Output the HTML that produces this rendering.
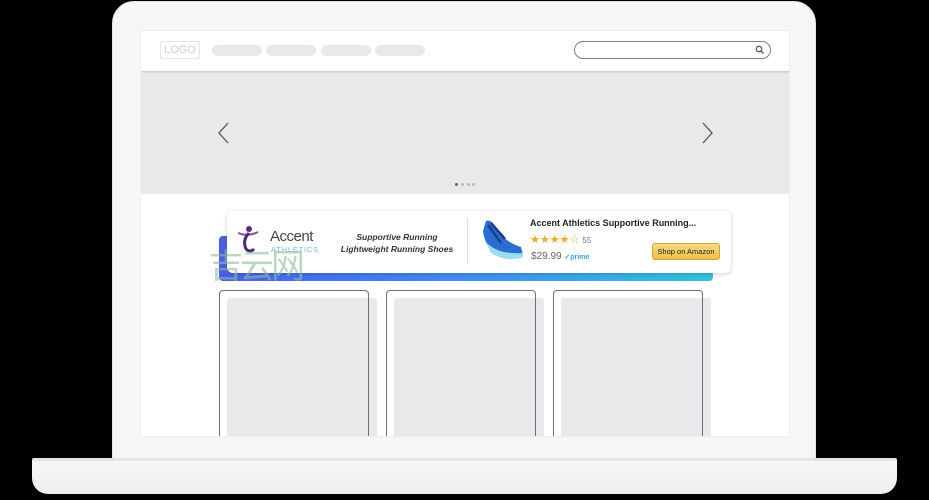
<!DOCTYPE html>
<html><head><style>
*{margin:0;padding:0;box-sizing:border-box}
body{width:929px;height:500px;background:#000;position:relative;overflow:hidden;font-family:"Liberation Sans",sans-serif}
.a{position:absolute}
</style></head><body>
<div class="a" style="left:112px;top:1px;width:704px;height:465px;background:#f5f6f7;border-radius:22px 22px 0 0;border:1px solid #e2e3e5"></div>
<div class="a" style="left:32px;top:458px;width:865px;height:36px;background:linear-gradient(#f6f7f8,#eceef0);border-radius:2px 2px 16px 16px;border-top:3px solid #e4e5e7"></div>
<div class="a" style="left:140px;top:30px;width:650px;height:407px;background:#fff;border:1px solid #eee;overflow:hidden">
 <div class="a" style="left:0;top:0;width:650px;height:40px;background:#fff;box-shadow:0 2px 2px #c9cacc"></div>
 <div class="a" style="left:19px;top:10px;width:40px;height:18px;border:1px solid #e4e5e7;border-radius:2px;color:#d0d1d3;font-size:11px;line-height:16px;text-align:center;letter-spacing:0">LOGO</div>
 <div class="a" style="left:71px;top:14px;width:50px;height:11px;background:#e8e9ea;border-radius:6px"></div>
 <div class="a" style="left:125px;top:14px;width:50px;height:11px;background:#e8e9ea;border-radius:6px"></div>
 <div class="a" style="left:180px;top:14px;width:50px;height:11px;background:#e8e9ea;border-radius:6px"></div>
 <div class="a" style="left:234px;top:14px;width:50px;height:11px;background:#e8e9ea;border-radius:6px"></div>
 <div class="a" style="left:433px;top:10px;width:197px;height:18px;border:1.5px solid #7a828c;border-radius:9px"></div>
 <svg class="a" style="left:614px;top:14px" width="10" height="10"><circle cx="4" cy="4" r="2.7" fill="none" stroke="#555" stroke-width="1.3"/><path d="M6 6L8.5 8.5" stroke="#555" stroke-width="1.4"/></svg>
 <div class="a" style="left:0;top:42px;width:650px;height:121px;background:#e8e9ea"></div>
 <svg class="a" style="left:76px;top:90px" width="14" height="24"><path d="M11 2L2 12L11 22" fill="none" stroke="#555" stroke-width="1.3"/></svg>
 <svg class="a" style="left:559px;top:90px" width="14" height="24"><path d="M3 2L12 12L3 22" fill="none" stroke="#555" stroke-width="1.3"/></svg>
 <div class="a" style="left:314px;top:152px;width:3px;height:3px;background:#666;border-radius:50%"></div>
 <div class="a" style="left:320px;top:152px;width:3px;height:3px;background:#bbb;border-radius:50%"></div>
 <div class="a" style="left:326px;top:152px;width:3px;height:3px;background:#bbb;border-radius:50%"></div>
 <div class="a" style="left:331px;top:152px;width:3px;height:3px;background:#bbb;border-radius:50%"></div>
 <div class="a" style="left:78px;top:205px;width:494px;height:45px;background:linear-gradient(90deg,#4a5ee8,#3f8ef0 50%,#2fc3dc);border-radius:4px"></div>
 <div class="a" style="left:86px;top:180px;width:504px;height:62px;background:#fff;border-radius:6px;box-shadow:0 1px 4px rgba(0,0,0,.2)"></div>
 <svg class="a" style="left:95px;top:194px" width="24" height="30"><circle cx="13" cy="4" r="3" fill="#5a2d82"/><path d="M2 8Q12 12 22 7" stroke="#7b4ca0" stroke-width="2" fill="none"/><path d="M13 8Q6 15 10 24Q14 28 18 24" stroke="#4a2a7a" stroke-width="3" fill="none"/></svg>
 <div class="a" style="left:129px;top:197px;font-size:15px;color:#444;letter-spacing:-.5px">Accent</div>
 <div class="a" style="left:130px;top:214px;font-size:7.5px;color:#79b6d9;letter-spacing:.8px">ATHLETICS</div>
 <div class="a" style="left:190px;top:200px;width:132px;text-align:center;font-size:8.5px;font-style:italic;font-weight:bold;color:#333;line-height:12px">Supportive Running<br>Lightweight Running Shoes</div>
 <div class="a" style="left:326px;top:187px;width:1px;height:47px;background:#ddd"></div>
 <svg class="a" style="left:340px;top:186px" width="45" height="48"><path d="M5 4Q9 2 13 8L22 20Q30 27 40 30L42 38Q30 44 16 38Q4 30 2 14Z" fill="#2a6ed4"/><path d="M4 24Q16 38 42 36L42 40Q26 46 10 36Z" fill="#9fdcf0"/><path d="M7 8L20 26M10 6L24 22" stroke="#1c3e8a" stroke-width="2.5"/></svg>
 <div class="a" style="left:389px;top:187px;font-size:9px;font-weight:bold;color:#222">Accent Athletics Supportive Running...</div>
 <div class="a" style="left:389px;top:202px;font-size:11px;color:#f5a623;letter-spacing:0">★★★★☆ <span style="font-size:8px;color:#777">55</span></div>
 <div class="a" style="left:390px;top:220px;font-size:10px;color:#666">$29.99 <span style="font-size:7px;color:#3a9fdc;font-weight:bold">✓prime</span></div>
 <div class="a" style="left:511px;top:212px;width:68px;height:17px;background:linear-gradient(#f7d883,#f0c14b);border:1px solid #d4a63a;border-radius:3px;font-size:7.5px;color:#222;text-align:center;line-height:15px">Shop on Amazon</div>
 <div class="a" style="left:68px;top:214px;font-family:'Noto Sans CJK SC',sans-serif;font-size:34px;color:rgba(140,190,150,.6);line-height:38px;letter-spacing:-3px">吉云网</div>
 <div class="a" style="left:86px;top:267px;width:150px;height:150px;background:#e8e9ea;border-radius:3px"></div>
 <div class="a" style="left:78px;top:259px;width:150px;height:160px;border:1.5px solid #6b7078;border-radius:4px"></div>
 <div class="a" style="left:253px;top:267px;width:150px;height:150px;background:#e8e9ea;border-radius:3px"></div>
 <div class="a" style="left:245px;top:259px;width:150px;height:160px;border:1.5px solid #6b7078;border-radius:4px"></div>
 <div class="a" style="left:420px;top:267px;width:150px;height:150px;background:#e8e9ea;border-radius:3px"></div>
 <div class="a" style="left:412px;top:259px;width:150px;height:160px;border:1.5px solid #6b7078;border-radius:4px"></div>
</div>
</body></html>
